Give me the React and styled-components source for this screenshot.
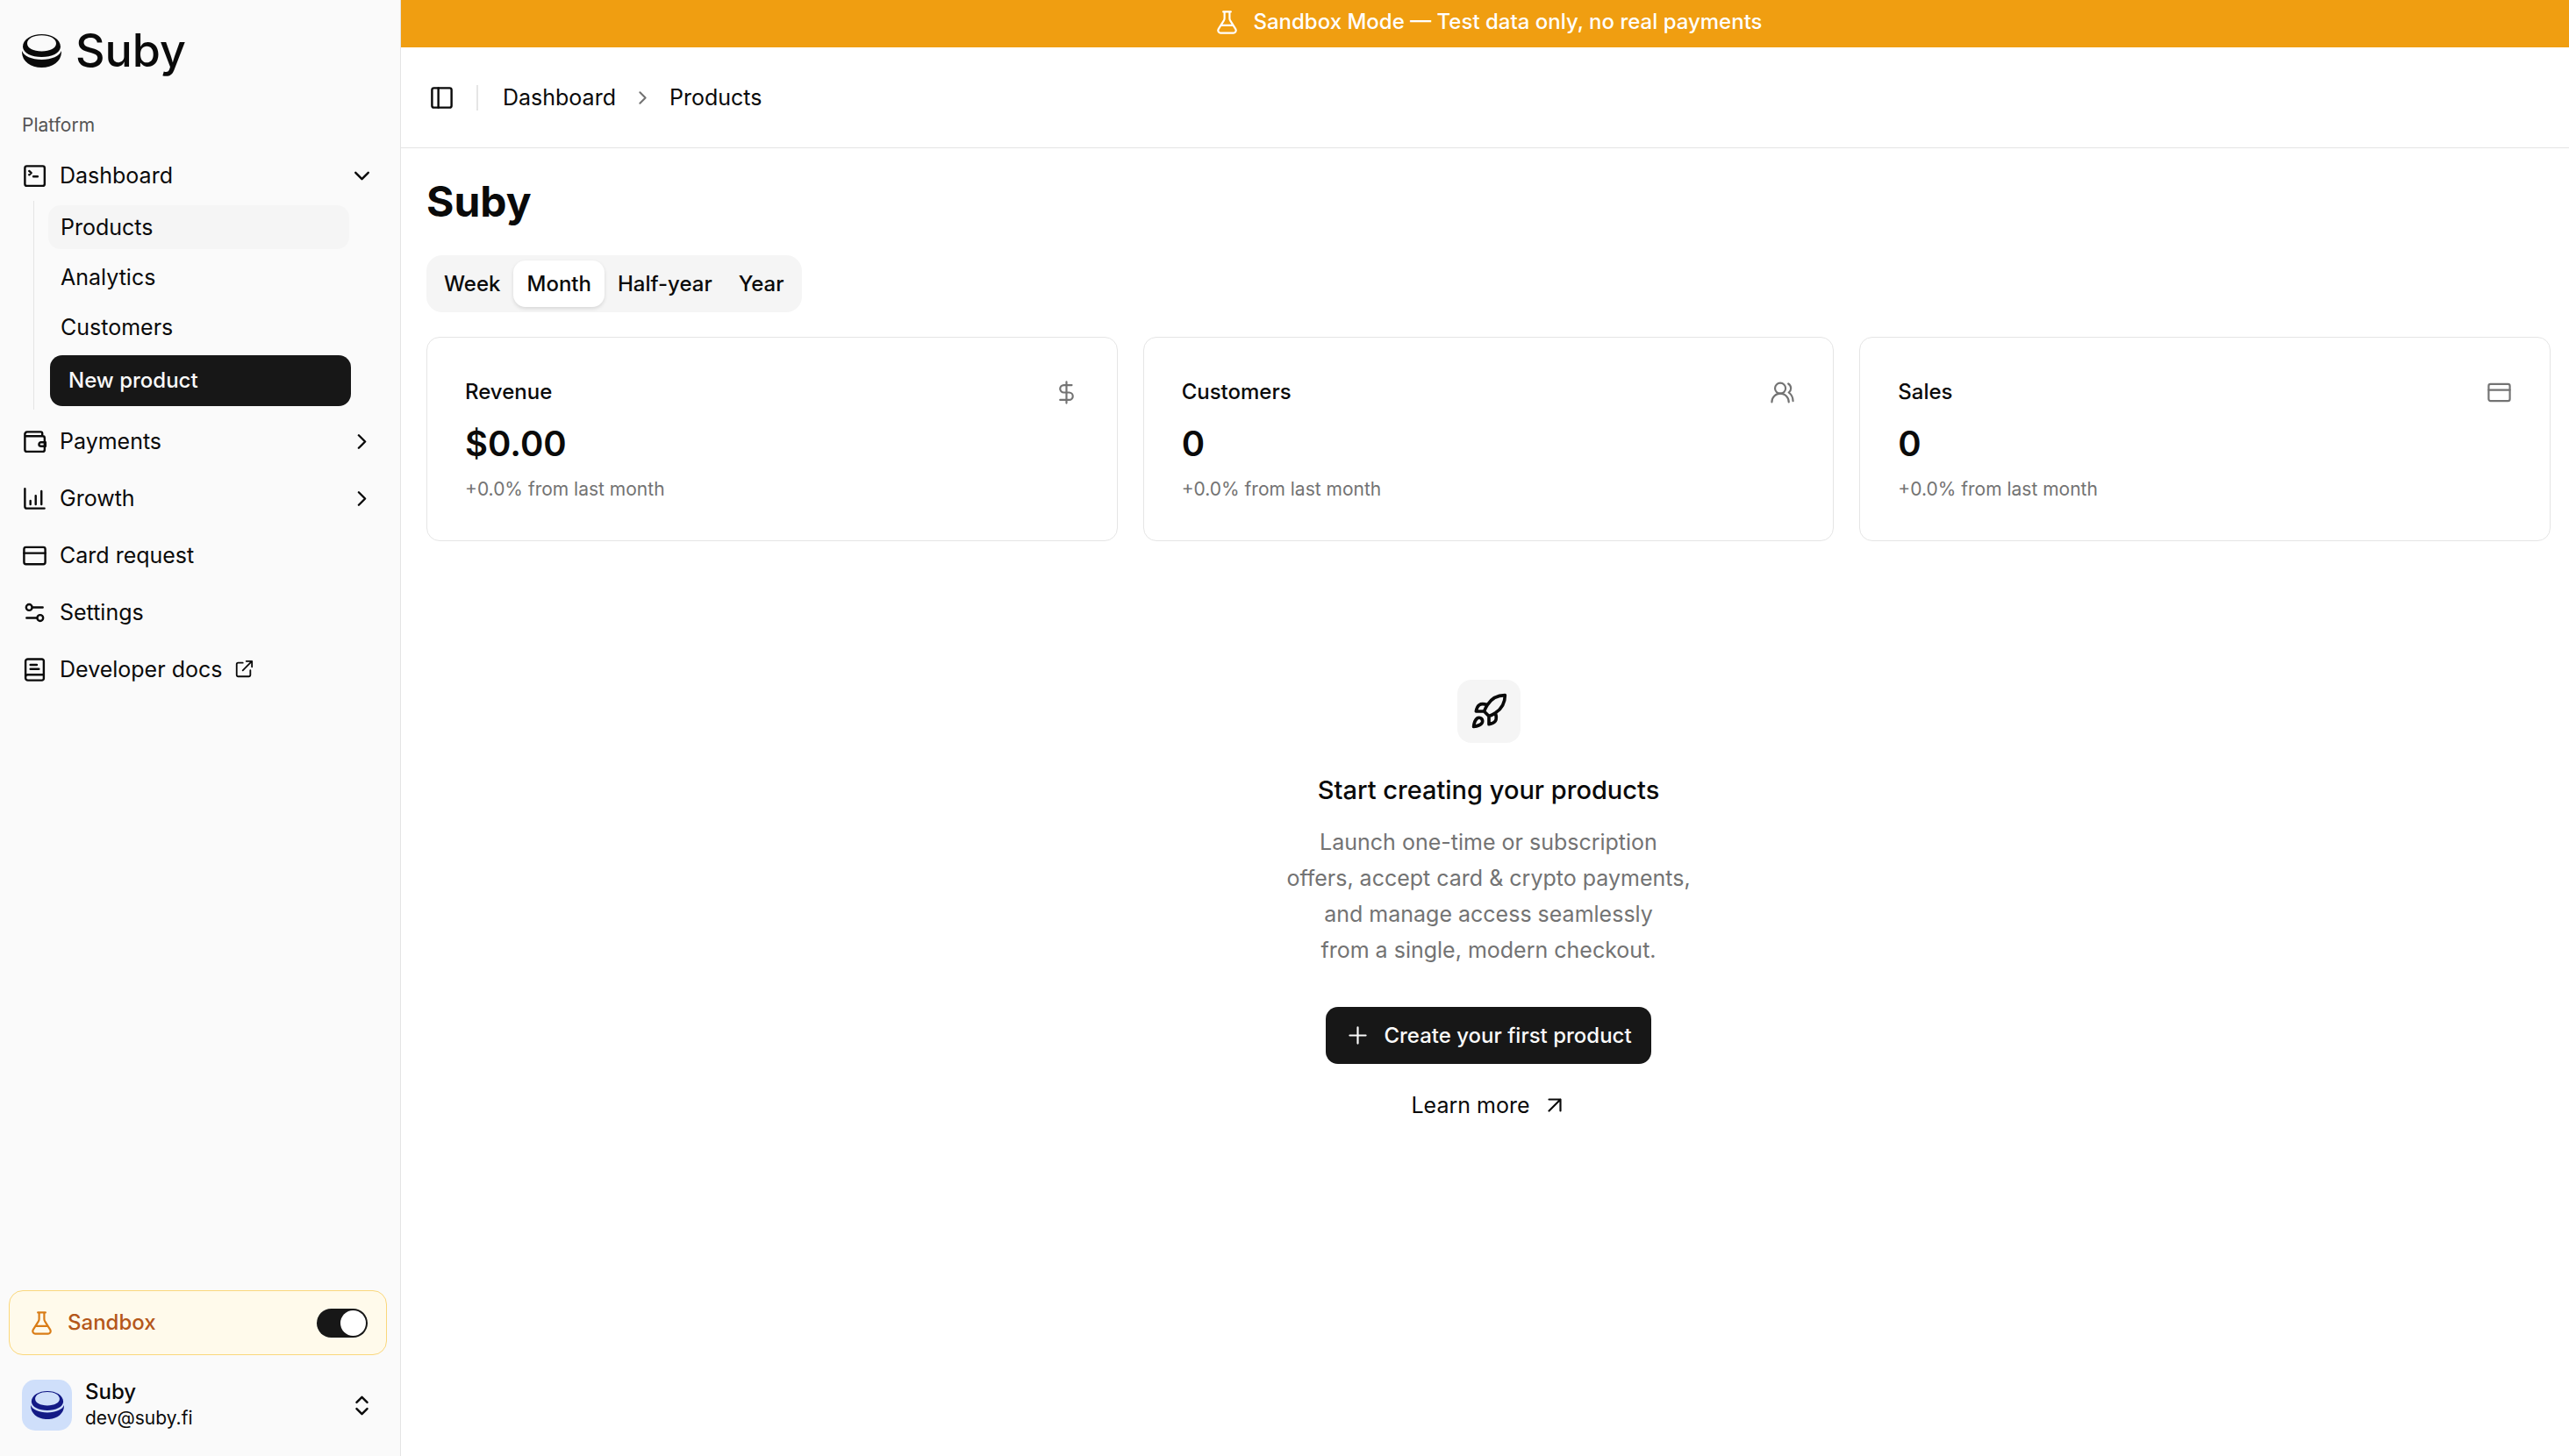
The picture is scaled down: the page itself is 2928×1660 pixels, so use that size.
import React, { useState } from 'react';
import styled, { createGlobalStyle } from 'styled-components';

const Global = createGlobalStyle`
  *, *::before, *::after { box-sizing: border-box; }
  body {
    margin: 0;
    background: #ffffff;
    color: #0a0a0a;
    font-family: Inter, "Liberation Sans", sans-serif;
    font-size: 25px;
    line-height: 36px;
  }
  button { font: inherit; color: inherit; border: 0; background: none; padding: 0; cursor: pointer; }
  a { color: inherit; text-decoration: none; }
  h1, h2, p, ul, ol { margin: 0; padding: 0; }
  ul, ol { list-style: none; }
  svg { display: block; flex: none; }
`;

/* ---------- icons ---------- */

const Svg = ({ size = 29, weight = 2, children, ...rest }) => (
  <svg
    width={size}
    height={size}
    viewBox="0 0 24 24"
    fill="none"
    stroke="currentColor"
    strokeWidth={weight}
    strokeLinecap="round"
    strokeLinejoin="round"
    aria-hidden="true"
    {...rest}
  >
    {children}
  </svg>
);

const TerminalIcon = () => (
  <Svg>
    <rect x="2.8" y="2.8" width="18.6" height="18.6" rx="1.8" />
    <path d="m6.8 7.4 2 1.8-2 1.8M10.8 12.6h4" />
  </Svg>
);
const WalletIcon = () => (
  <Svg>
    <path d="M2.8 4.6v15a1.8 1.8 0 0 0 1.8 1.8h15a1.8 1.8 0 0 0 1.8-1.8V8.6a1.8 1.8 0 0 0-1.8-1.8H4.2M2.8 5.2a2.4 2.4 0 0 1 2.2-2.4h12.800a1.4 1.4 0 0 1 1.4 1.4v2.6" />
    <path d="M22.200 12.600h-4.200a1.900 1.900 0 0 0 0 3.800h4.200z" />
  </Svg>
);
const GrowthIcon = () => (
  <Svg>
    <path d="M2.8 2.6v16.8a1.8 1.8 0 0 0 1.8 1.8h16.6M8 14v3.4M13 9.2v8.2M18.4 5v12.4" />
  </Svg>
);
const CardIcon = (props) => (
  <Svg {...props}>
    <rect x="2" y="4" width="20" height="16" rx="1.8" />
    <path d="M2 9.6h20" />
  </Svg>
);
const SettingsIcon = () => (
  <Svg>
    <circle cx="6.8" cy="7" r="2.8" />
    <circle cx="17.2" cy="17" r="2.8" />
    <path d="M9.8 7h9.800M4.400 17h9.800" />
  </Svg>
);
const DocsIcon = () => (
  <Svg>
    <path d="M20.6 16.8v-13a1.8 1.8 0 0 0-1.8-1.8H5.6a2.200 2.200 0 0 0-2.200 2.200v15.600A2.200 2.200 0 0 0 5.600 22h13.200a1.800 1.800 0 0 0 1.800-1.800v-3.400H5.600a2.200 2.200 0 0 0-2.200 2.200M8 7.400h6M8 11.400h8" />
  </Svg>
);
const ExternalIcon = () => (
  <Svg size={22}>
    <path d="M10.6 4H4.800A1.800 1.800 0 0 0 3 5.800v13.400A1.800 1.800 0 0 0 4.800 21h13.400a1.800 1.800 0 0 0 1.800-1.800v-5.800M15 2h7v7M21.600 2.400l-11 11" />
  </Svg>
);
const PanelIcon = () => (
  <Svg>
    <rect x="2.8" y="2.8" width="18.4" height="18.4" rx="1.8" />
    <path d="M8.8 2.8v18.4" />
  </Svg>
);
const FlaskIcon = () => (
  <Svg weight={1.8}>
    <path d="M8.400 2h7.200M9.600 2v6c0 .8-.2 1.500-.6 2.200L3.900 18.300c-.9 1.600 0 3.700 1.900 3.700h12.400c1.900 0 2.800-2.100 1.900-3.700L15 10.200c-.4-.7-.6-1.400-.6-2.200V2M6.600 14.800h10.800" />
  </Svg>
);
const ChevronDown = () => <Svg><path d="m6 9 6 6 6-6" /></Svg>;
const ChevronRight = (props) => <Svg {...props}><path d="m9 18 6-6-6-6" /></Svg>;
const Selector = () => <Svg><path d="m7 9 5-5 5 5M7 15l5 5 5-5" /></Svg>;
const DollarIcon = () => (
  <Svg weight={1.8}>
    <path d="M12 2v20M17 5H9.500a3.500 3.500 0 0 0 0 7h5a3.500 3.500 0 0 1 0 7H6" />
  </Svg>
);
const UsersIcon = () => (
  <Svg weight={1.8}>
    <path d="M18 21a8 8 0 0 0-16 0M22 20c0-3.370-2-6.500-4-8a5 5 0 0 0-.450-8.300" />
    <circle cx="10" cy="8" r="5" />
  </Svg>
);
const RocketIcon = () => (
  <Svg size={44}>
    <path d="M4.500 16.500c-1.500 1.260-2 5-2 5s3.740-.500 5-2c.710-.840.700-2.130-.090-2.910a2.180 2.180 0 0 0-2.910-.090zM12 15l-3-3a22 22 0 0 1 2-3.950A12.880 12.880 0 0 1 22 2c0 2.720-.780 7.500-6 11a22.350 22.350 0 0 1-4 2zM9 12H4s.550-3.030 2-4c1.620-1.080 5 0 5 0M12 15v5s3.030-.550 4-2c1.080-1.620 0-5 0-5" />
  </Svg>
);
const PlusIcon = () => <Svg weight={1.8}><path d="M4.500 12h15M12 4.500v15" /></Svg>;
const ArrowUpRight = () => <Svg size={26}><path d="M6 6h12v12M18 6 6 18" /></Svg>;

const Puck = ({ width }) => (
  <svg width={width} viewBox="0 0 45 38" fill="currentColor" aria-hidden="true">
    <path
      fillRule="evenodd"
      d="M22.500 0C34 0 44 5.600 44 14.500 43.500 21.500 34 26 22.500 26S1.500 21.500 1 14.500C1 5.600 11 0 22.500 0zm0 1.200C13 1.200 6 5 6 10.500 6 16 13 19.500 22.500 19.500S39 16 39 10.500C39 5 32 1.200 22.500 1.200z"
    />
    <path d="M0 19c2 5.800 11 10 22.500 10S43 24.800 45 19c.6 11-9 19-22.500 19S-.6 30 0 19z" />
  </svg>
);

/* ---------- shell ---------- */

const Shell = styled.div`
  display: flex;
  min-height: 100vh;
`;

const Sidebar = styled.aside`
  flex: none;
  display: flex;
  flex-direction: column;
  width: 457px;
  background: #fafafa;
  border-right: 1px solid #e4e4e4;
`;

const Brand = styled.a`
  display: flex;
  align-items: center;
  gap: 16px;
  padding: 26px 25px 0;
  font-size: 52px;
  line-height: 64px;
  font-weight: 500;
`;

const Nav = styled.nav`
  flex: 1;
  padding: 35px 15px 0;
`;

const NavLabel = styled.p`
  padding: 0 10px;
  margin-bottom: 10px;
  font-size: 21px;
  color: #555555;
`;

const NavList = styled.ul`
  display: flex;
  flex-direction: column;
  gap: 7px;
`;

const NavLink = styled.a`
  display: flex;
  align-items: center;
  gap: 14px;
  width: 100%;
  height: 58px;
  padding: 0 14px 0 10px;
  text-align: left;
`;

const NavText = styled.span`
  flex: ${(p) => (p.$fit ? 'none' : 1)};
`;

const SubList = styled.ul`
  display: flex;
  flex-direction: column;
  gap: 7px;
  margin: 0 43px 0 23px;
  padding: 5px 0 4px 16px;
  border-left: 1px solid #e4e4e4;
`;

const SubLink = styled.a`
  display: flex;
  align-items: center;
  height: 50px;
  padding: 0 14px;
  border-radius: 14px;
  background: ${(p) => (p.$active ? '#f5f5f5' : 'transparent')};
`;

const NewProduct = styled.button`
  display: flex;
  align-items: center;
  width: 100%;
  height: 58px;
  margin-left: 2px;
  padding: 0 21px;
  border-radius: 14px;
  background: #171717;
  color: #fafafa;
  font-size: 24px;
  font-weight: 500;
`;

const SidebarFooter = styled.div`
  display: flex;
  flex-direction: column;
  gap: 20px;
  padding: 0 15px 21px 10px;
`;

const SandboxCard = styled.label`
  display: flex;
  align-items: center;
  gap: 15px;
  height: 74px;
  padding: 0 21px 0 22px;
  border: 1px solid #fad77c;
  border-radius: 16px;
  background: #fffaeb;
  color: #d97c16;
  cursor: pointer;
`;

const SandboxText = styled.span`
  flex: 1;
  color: #b4571a;
  font-size: 24px;
  font-weight: 500;
`;

const Toggle = styled.input`
  appearance: none;
  flex: none;
  display: flex;
  align-items: center;
  width: 58px;
  height: 33px;
  margin: 0;
  padding: 0 2px;
  border-radius: 17px;
  background: #171717;
  cursor: pointer;

  &::before {
    content: '';
    width: 29px;
    height: 29px;
    border-radius: 50%;
    background: #ffffff;
  }
  &:checked::before { margin-left: auto; }
`;

const Profile = styled.button`
  display: flex;
  align-items: center;
  gap: 15px;
  padding: 7px 14px 7px 15px;
  text-align: left;
`;

const Avatar = styled.span`
  display: grid;
  place-items: center;
  width: 57px;
  height: 58px;
  border-radius: 15px;
  background: #cfdffa;
  color: #131a86;
`;

const Identity = styled.span`
  flex: 1;
  display: flex;
  flex-direction: column;
  line-height: 30px;
`;

const IdentityName = styled.span`
  font-size: 24px;
  font-weight: 500;
`;

const IdentityMail = styled.span`
  font-size: 21px;
`;

/* ---------- main ---------- */

const Main = styled.main`
  flex: 1;
  min-width: 0;
`;

const Banner = styled.div`
  display: flex;
  align-items: center;
  justify-content: center;
  gap: 15px;
  height: 54px;
  padding: 0 0 4px 8px;
  background: #f09e11;
  color: #ffffff;
  font-size: 24px;
  font-weight: 500;
`;

const Header = styled.header`
  display: flex;
  align-items: center;
  height: 115px;
  padding: 0 32px;
  border-bottom: 1px solid #e4e4e4;
`;

const Divider = styled.span`
  width: 2px;
  height: 29px;
  margin: 0 28px 0 25px;
  background: #e5e5e5;
`;

const Crumbs = styled.ol`
  display: flex;
  align-items: center;
  gap: 18px;
`;

const Crumb = styled.li`
  display: flex;
  color: ${(p) => (p.$muted ? '#737373' : 'inherit')};
`;

const Content = styled.div`
  padding: 29px 21px 0 29px;
`;

const Title = styled.h1`
  font-size: 48px;
  line-height: 64px;
  font-weight: 700;
`;

const Tabs = styled.div`
  display: inline-flex;
  height: 65px;
  margin: 29px 0 28px;
  padding: 6px 5px;
  border-radius: 18px;
  background: #f5f5f5;
  vertical-align: top;
`;

const Tab = styled.button`
  padding: 0 15px;
  border-radius: 14px;
  font-size: 24px;
  font-weight: 500;
  background: ${(p) => (p.$on ? '#ffffff' : 'transparent')};
  box-shadow: ${(p) => (p.$on ? '0 2px 4px rgba(0, 0, 0, 0.12)' : 'none')};
`;

const Cards = styled.div`
  display: grid;
  grid-template-columns: repeat(3, 1fr);
  gap: 29px;
`;

const Card = styled.section`
  height: 233px;
  padding: 44px 43px;
  border: 1px solid #e5e5e5;
  border-radius: 15px;
`;

const CardHead = styled.div`
  display: flex;
  align-items: center;
  justify-content: space-between;
  color: #737373;
`;

const CardTitle = styled.h2`
  font-size: 24px;
  line-height: 36px;
  font-weight: 500;
  color: #0a0a0a;
`;

const CardValue = styled.p`
  margin-top: 16px;
  font-size: 40px;
  line-height: 50px;
  font-weight: 600;
`;

const CardNote = styled.p`
  margin-top: 9px;
  font-size: 21px;
  color: #737373;
`;

const Empty = styled.section`
  display: flex;
  flex-direction: column;
  align-items: center;
  padding-top: 158px;
  text-align: center;
`;

const EmptyBadge = styled.div`
  display: grid;
  place-items: center;
  width: 72px;
  height: 72px;
  border-radius: 16px;
  background: #f5f5f5;
`;

const EmptyTitle = styled.h2`
  margin-top: 36px;
  font-size: 29px;
  line-height: 36px;
  font-weight: 500;
`;

const EmptyText = styled.p`
  width: 490px;
  margin-top: 21px;
  line-height: 41px;
  color: #737373;
`;

const Primary = styled.button`
  display: flex;
  align-items: center;
  gap: 15px;
  height: 65px;
  margin-top: 44px;
  padding: 0 22px;
  border-radius: 14px;
  background: #171717;
  color: #fafafa;
  font-size: 24px;
  font-weight: 500;
`;

const LearnMore = styled.a`
  display: flex;
  align-items: center;
  gap: 15px;
  margin-top: 29px;
`;

const navItems = [
  { label: 'Payments', Icon: WalletIcon, expandable: true },
  { label: 'Growth', Icon: GrowthIcon, expandable: true },
  { label: 'Card request', Icon: CardIcon },
  { label: 'Settings', Icon: SettingsIcon },
  { label: 'Developer docs', Icon: DocsIcon, external: true },
];

const stats = [
  { title: 'Revenue', value: '$0.00', icon: <DollarIcon /> },
  { title: 'Customers', value: '0', icon: <UsersIcon /> },
  { title: 'Sales', value: '0', icon: <CardIcon weight={1.8} /> },
];

export default function App() {
  const [range, setRange] = useState('Month');
  const [sandbox, setSandbox] = useState(true);

  return (
    <Shell>
      <Global />
      <Sidebar>
        <Brand href="#"><Puck width={45} />Suby</Brand>
        <Nav>
          <NavLabel>Platform</NavLabel>
          <NavList>
            <li>
              <NavLink as="button" type="button">
                <TerminalIcon />
                <NavText>Dashboard</NavText>
                <ChevronDown />
              </NavLink>
              <SubList>
                <li><SubLink href="#products" $active>Products</SubLink></li>
                <li><SubLink href="#analytics">Analytics</SubLink></li>
                <li><SubLink href="#customers">Customers</SubLink></li>
                <li><NewProduct type="button">New product</NewProduct></li>
              </SubList>
            </li>
            {navItems.map(({ label, Icon, expandable, external }) => (
              <li key={label}>
                <NavLink {...(expandable ? { as: 'button', type: 'button' } : { href: '#' })}>
                  <Icon />
                  <NavText $fit={external}>{label}</NavText>
                  {expandable && <ChevronRight />}
                  {external && <ExternalIcon />}
                </NavLink>
              </li>
            ))}
          </NavList>
        </Nav>
        <SidebarFooter>
          <SandboxCard htmlFor="sandbox">
            <FlaskIcon />
            <SandboxText>Sandbox</SandboxText>
            <Toggle
              id="sandbox"
              type="checkbox"
              role="switch"
              checked={sandbox}
              onChange={(e) => setSandbox(e.target.checked)}
            />
          </SandboxCard>
          <Profile type="button">
            <Avatar><Puck width={38} /></Avatar>
            <Identity>
              <IdentityName>Suby</IdentityName>
              <IdentityMail>dev@suby.fi</IdentityMail>
            </Identity>
            <Selector />
          </Profile>
        </SidebarFooter>
      </Sidebar>

      <Main>
        <Banner>
          <FlaskIcon />
          <span>Sandbox Mode — Test data only, no real payments</span>
        </Banner>
        <Header>
          <button type="button" aria-label="Toggle sidebar"><PanelIcon /></button>
          <Divider />
          <Crumbs>
            <Crumb><a href="#dashboard">Dashboard</a></Crumb>
            <Crumb $muted><ChevronRight size={25} /></Crumb>
            <Crumb>Products</Crumb>
          </Crumbs>
        </Header>
        <Content>
          <Title>Suby</Title>
          <Tabs role="tablist">
            {['Week', 'Month', 'Half-year', 'Year'].map((t) => (
              <Tab key={t} type="button" role="tab" aria-selected={range === t} $on={range === t} onClick={() => setRange(t)}>
                {t}
              </Tab>
            ))}
          </Tabs>
          <Cards>
            {stats.map((s) => (
              <Card key={s.title}>
                <CardHead><CardTitle>{s.title}</CardTitle>{s.icon}</CardHead>
                <CardValue>{s.value}</CardValue>
                <CardNote>+0.0% from last month</CardNote>
              </Card>
            ))}
          </Cards>
          <Empty>
            <EmptyBadge><RocketIcon /></EmptyBadge>
            <EmptyTitle>Start creating your products</EmptyTitle>
            <EmptyText>
              Launch one-time or subscription<br />
              offers, accept card &amp; crypto payments,<br />
              and manage access seamlessly<br />
              from a single, modern checkout.
            </EmptyText>
            <Primary type="button"><PlusIcon />Create your first product</Primary>
            <LearnMore href="#learn">Learn more<ArrowUpRight /></LearnMore>
          </Empty>
        </Content>
      </Main>
    </Shell>
  );
}
